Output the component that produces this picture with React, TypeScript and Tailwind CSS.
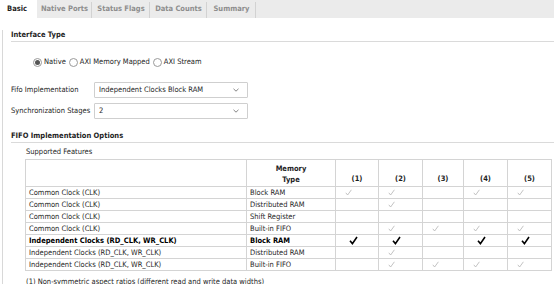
import React from "react";

const tabs = [
  { label: "Native Ports", w: "w-[55px]" },
  { label: "Status Flags", w: "w-[58px]" },
  { label: "Data Counts", w: "w-[57px]" },
  { label: "Summary", w: "w-[49px]" },
];

type Row = { clock: string; mem: string; checks: boolean[]; bold?: boolean };

const rows: Row[] = [
  { clock: "Common Clock (CLK)", mem: "Block RAM", checks: [true, true, false, true, true] },
  { clock: "Common Clock (CLK)", mem: "Distributed RAM", checks: [false, true, false, false, false] },
  { clock: "Common Clock (CLK)", mem: "Shift Register", checks: [false, false, false, false, false] },
  { clock: "Common Clock (CLK)", mem: "Built-in FIFO", checks: [false, true, true, true, true] },
  { clock: "Independent Clocks (RD_CLK, WR_CLK)", mem: "Block RAM", checks: [true, true, false, true, true], bold: true },
  { clock: "Independent Clocks (RD_CLK, WR_CLK)", mem: "Distributed RAM", checks: [false, true, false, false, false] },
  { clock: "Independent Clocks (RD_CLK, WR_CLK)", mem: "Built-in FIFO", checks: [false, true, true, true, true] },
];

const colW = ["w-[43px]", "w-[44px]", "w-[41px]", "w-[44px]", "w-[44px]"];

const Check = ({ bold }: { bold?: boolean }) =>
  bold ? (
    <svg width="9" height="9" viewBox="0 0 9 9" className="ml-[13px]">
      <path d="M1 4.8 L3.4 7.6 L8 1" fill="none" stroke="#000" strokeWidth="1.6" />
    </svg>
  ) : (
    <svg width="7" height="7" viewBox="0 0 7 7" className="ml-[9px]">
      <path d="M0.8 3.8 L2.6 6 L6.4 0.8" fill="none" stroke="#b4b4b4" strokeWidth="0.8" />
    </svg>
  );

const Radio = ({ on, label }: { on?: boolean; label: string }) => (
  <div className="flex items-center gap-[2px] mr-[3px]">
    <span className="w-[9px] h-[9px] rounded-full border border-[#9a9a9a] bg-white flex items-center justify-center">
      {on && <span className="w-[5px] h-[5px] rounded-full bg-[#555]" />}
    </span>
    <span>{label}</span>
  </div>
);

const Select = ({ value }: { value: string }) => (
  <div className="w-[154px] h-[16px] border border-[#cfcfcf] rounded-[1px] flex items-center justify-between pl-[4px] pr-[8px]">
    <span>{value}</span>
    <svg width="6" height="4" viewBox="0 0 6 4">
      <path d="M0.5 0.8 L3 3.2 L5.5 0.8" fill="none" stroke="#777" strokeWidth="0.9" />
    </svg>
  </div>
);

export default function App() {
  return (
    <div className="w-[554px] h-[284px] overflow-hidden bg-white font-['DejaVu_Sans_Condensed','Liberation_Sans',sans-serif] text-[7.5px] leading-[10px] text-[#1e1e1e]">
      <div className="flex h-[18px] bg-[#ebebeb]">
        <div className="w-[37px] bg-white font-bold flex items-center pl-[7px]">Basic</div>
        {tabs.map((t) => (
          <div key={t.label} className={`${t.w} flex items-center justify-center font-bold text-[#8e8e8e] relative`}>
            {t.label}
            <span className="absolute right-0 top-[2px] bottom-0 w-px bg-[#d2d2d2]" />
          </div>
        ))}
      </div>

      <div className="ml-[2px] border-l border-[#d8d8d8] pl-[8px] h-[266px]">
        <div className="mt-[12px] h-[12px] border-b border-[#dadada] font-bold">Interface Type</div>

        <div className="mt-[14px] h-[12px] pl-[22px] flex items-center">
          <Radio on label="Native" />
          <Radio label="AXI Memory Mapped" />
          <Radio label="AXI Stream" />
        </div>

        <div className="mt-[14px] flex items-center">
          <span className="w-[83px] whitespace-nowrap">Fifo Implementation</span>
          <Select value="Independent Clocks Block RAM" />
        </div>
        <div className="mt-[5px] flex items-center">
          <span className="w-[83px] whitespace-nowrap">Synchronization Stages</span>
          <Select value="2" />
        </div>

        <div className="mt-[12px] h-[12px] border-b border-[#dadada] font-bold">FIFO Implementation Options</div>

        <div className="mt-[4px] pl-[15px]">Supported Features</div>

        <table className="mt-[2px] ml-[14px] w-[526px] border-collapse table-fixed">
          <thead>
            <tr className="h-[27px] font-bold">
              <th className="w-[221px] border border-[#d4d4d4]" />
              <th className="w-[89px] border border-[#d4d4d4] text-center align-bottom pb-[1px] leading-[11px] font-bold">
                Memory
                <br />
                Type
              </th>
              {["(1)", "(2)", "(3)", "(4)", "(5)"].map((h, i) => (
                <th key={h} className={`${colW[i]} border border-[#d4d4d4] text-center align-bottom pb-[2px] font-bold`}>
                  {h}
                </th>
              ))}
            </tr>
          </thead>
          <tbody>
            {rows.map((r, i) => (
              <tr key={i} className={`h-[12px] ${r.bold ? "font-bold text-black" : ""}`}>
                <td className="border border-[#d4d4d4] pl-[3px] p-0 leading-[11px]">{r.clock}</td>
                <td className="border border-[#d4d4d4] pl-[3px] p-0 leading-[11px]">{r.mem}</td>
                {r.checks.map((c, j) => (
                  <td key={j} className="border border-[#d4d4d4] p-0 leading-[11px]">
                    <div className="h-[11px] flex items-center">{c && <Check bold={r.bold} />}</div>
                  </td>
                ))}
              </tr>
            ))}
          </tbody>
        </table>

        <div className="mt-[6px] pl-[15px] whitespace-nowrap">
          (1) Non-symmetric aspect ratios (different read and write data widths)
        </div>
      </div>
    </div>
  );
}
